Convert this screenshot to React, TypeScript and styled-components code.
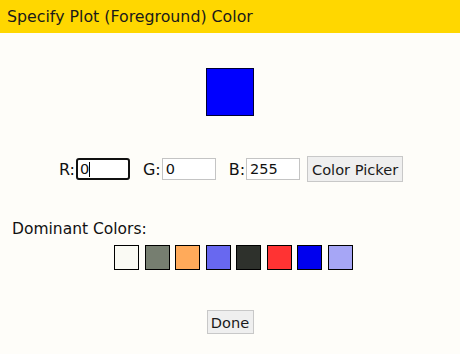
import React from "react";
import styled, { createGlobalStyle } from "styled-components";

const Global = createGlobalStyle`
  html, body { margin: 0; padding: 0; background: #fefdf9; }
  body { font-family: "DejaVu Sans", Verdana, sans-serif; color: #111; }
`;

const Page = styled.div`
  width: 460px;
  height: 354px;
  display: flex;
  flex-direction: column;
  background: #fefdf9;
`;

const Header = styled.div`
  height: 33px;
  background: #ffd700;
  padding-left: 7px;
  font-size: 15.8px;
  line-height: 33px;
  color: #1a1a1a;
`;

const Preview = styled.div<{ $color: string }>`
  align-self: center;
  margin-top: 35px;
  width: 46px;
  height: 46px;
  background: ${(p) => p.$color};
  border: 1px solid #000033;
`;

const InputRow = styled.div`
  margin-top: 40px;
  display: flex;
  align-items: center;
  justify-content: center;
  padding-left: 2px;
  font-size: 16px;
`;

const Label = styled.span<{ $lead: number }>`
  margin-left: ${(p) => p.$lead}px;
  margin-right: 1px;
`;

const Field = styled.div<{ $focus?: boolean }>`
  box-sizing: border-box;
  width: 54px;
  height: 22px;
  border: ${(p) => (p.$focus ? "2px solid #111" : "1px solid #c4c4c4")};
  border-radius: ${(p) => (p.$focus ? "3px" : "0")};
  background: #fff;
  padding-left: ${(p) => (p.$focus ? "2px" : "3px")};
  font-size: 14.5px;
  line-height: ${(p) => (p.$focus ? "18px" : "20px")};
  display: flex;
  align-items: center;
`;

const Caret = styled.span`
  display: inline-block;
  width: 1px;
  height: 15px;
  background: #000;
`;

const Button = styled.div`
  box-sizing: border-box;
  background: #efefef;
  border: 1px solid #c8c8c8;
  font-size: 14.6px;
  color: #1a1a1a;
  display: flex;
  align-items: center;
  justify-content: center;
`;

const PickerButton = styled(Button)`
  margin-left: 7px;
  width: 96px;
  height: 26px;
`;

const DomLabel = styled.div`
  margin-top: 38px;
  padding-left: 12px;
  font-size: 15.5px;
  line-height: 18px;
`;

const SwatchRow = styled.div`
  margin-top: 7px;
  display: flex;
  gap: 5.5px;
  padding-left: 114px;
`;

const Swatch = styled.div<{ $color: string }>`
  box-sizing: border-box;
  width: 25px;
  height: 25px;
  border: 1px solid #000;
  background: ${(p) => p.$color};
`;

const DoneButton = styled(Button)`
  align-self: center;
  margin-top: 40px;
  width: 47px;
  height: 24px;
`;

const swatches = [
  "#fafaf4",
  "#767e70",
  "#ffaa5a",
  "#6868f0",
  "#2e312c",
  "#ff3333",
  "#0000ee",
  "#a6a6f6",
];

export default function App() {
  return (
    <>
      <Global />
      <Page>
        <Header>Specify Plot (Foreground) Color</Header>
        <Preview $color="#0000ff" />
        <InputRow>
          <Label $lead={0}>R:</Label>
          <Field $focus>
            0<Caret />
          </Field>
          <Label $lead={13}>G:</Label>
          <Field>0</Field>
          <Label $lead={13}>B:</Label>
          <Field>255</Field>
          <PickerButton>Color Picker</PickerButton>
        </InputRow>
        <DomLabel>Dominant Colors:</DomLabel>
        <SwatchRow>
          {swatches.map((c) => (
            <Swatch key={c} $color={c} />
          ))}
        </SwatchRow>
        <DoneButton>Done</DoneButton>
      </Page>
    </>
  );
}
